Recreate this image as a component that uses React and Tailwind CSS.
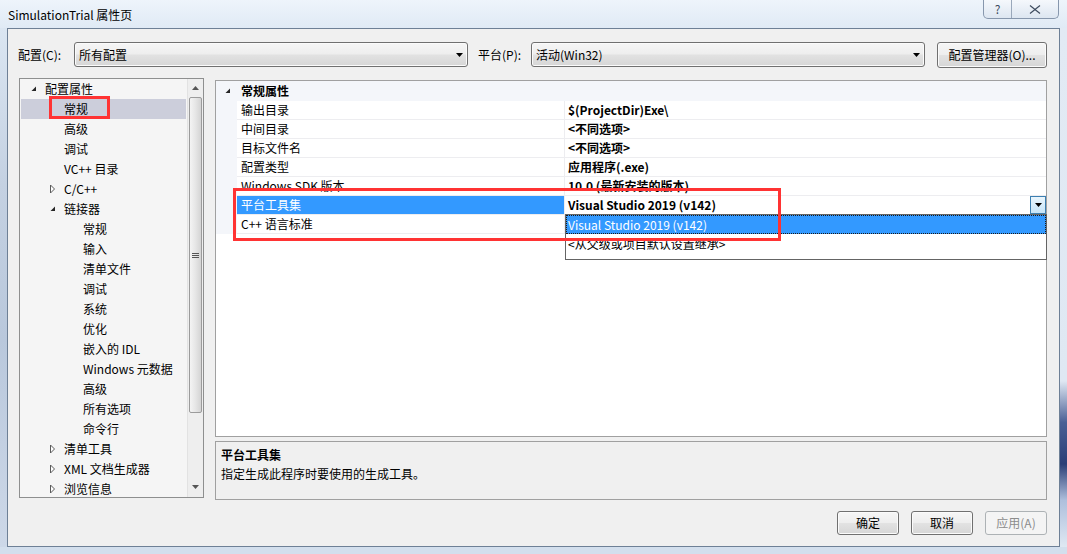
import React from 'react';

const treeItems = [
  { t: '配置属性', lvl: 0, exp: 'open' },
  { t: '常规', lvl: 1, sel: true },
  { t: '高级', lvl: 1 },
  { t: '调试', lvl: 1 },
  { t: 'VC++ 目录', lvl: 1 },
  { t: 'C/C++', lvl: 1, exp: 'closed' },
  { t: '链接器', lvl: 1, exp: 'open' },
  { t: '常规', lvl: 2 },
  { t: '输入', lvl: 2 },
  { t: '清单文件', lvl: 2 },
  { t: '调试', lvl: 2 },
  { t: '系统', lvl: 2 },
  { t: '优化', lvl: 2 },
  { t: '嵌入的 IDL', lvl: 2 },
  { t: 'Windows 元数据', lvl: 2 },
  { t: '高级', lvl: 2 },
  { t: '所有选项', lvl: 2 },
  { t: '命令行', lvl: 2 },
  { t: '清单工具', lvl: 1, exp: 'closed' },
  { t: 'XML 文档生成器', lvl: 1, exp: 'closed' },
  { t: '浏览信息', lvl: 1, exp: 'closed' },
];

const indent = { 0: 'pl-[8px]', 1: 'pl-[27px]', 2: 'pl-[46px]' };

const props = [
  ['输出目录', '$(ProjectDir)Exe\\'],
  ['中间目录', '<不同选项>'],
  ['目标文件名', '<不同选项>'],
  ['配置类型', '应用程序(.exe)'],
  ['Windows SDK 版本', '10.0 (最新安装的版本)'],
  ['平台工具集', 'Visual Studio 2019 (v142)', true],
  ['C++ 语言标准', ''],
];

// win7 style button face
const face =
  'border border-[#707070] rounded-[3px] bg-[linear-gradient(to_bottom,#f6f6f6_0%,#eeeeee_48%,#e2e2e2_52%,#d6d6d6_100%)] shadow-[inset_0_0_0_1px_#fbfbfb]';

function Expander({ type }) {
  if (type === 'open')
    return (
      <svg width="8" height="8" viewBox="0 0 8 8">
        <path d="M6 1.5 L6 6 L1.5 6 Z" fill="#262626" />
      </svg>
    );
  if (type === 'closed')
    return (
      <svg width="8" height="10" viewBox="0 0 8 10">
        <path d="M1.5 1 L5.5 5 L1.5 9 Z" fill="#fff" stroke="#5a5a5a" strokeWidth="1" />
      </svg>
    );
  return null;
}

function DownArrow() {
  return (
    <svg width="7" height="4" viewBox="0 0 7 4">
      <path d="M0 0 L7 0 L3.5 4 Z" fill="#000" />
    </svg>
  );
}

function Combo({ text, className }) {
  return (
    <div className={`h-[25px] flex items-center justify-between pl-[4px] pr-[4px] ${face} ${className}`}>
      <span className="leading-[18px]">{text}</span>
      <DownArrow />
    </div>
  );
}

function Tree() {
  return (
    <div className="w-[185px] h-[420px] border border-[#8e8f8f] bg-[#f5f5f5] flex overflow-hidden">
      <div className="flex-1 px-[1px]">
        {treeItems.map((it, i) => (
          <div
            key={i}
            className={`h-[20px] flex items-center ${indent[it.lvl]} ${it.sel ? 'bg-[#cccedb]' : ''}`}
          >
            <div className="w-[16px] flex items-center pl-[1px]">
              <Expander type={it.exp} />
            </div>
            <span className="leading-[18px] whitespace-nowrap">{it.t}</span>
          </div>
        ))}
      </div>
      {/* scrollbar */}
      <div className="w-[16px] bg-[#eeeeee] border-l border-[#e2e2e2] flex flex-col">
        <div className="h-[18px] flex items-center justify-center">
          <svg width="7" height="4" viewBox="0 0 7 4">
            <path d="M0 4 L7 4 L3.5 0 Z" fill="#555" />
          </svg>
        </div>
        <div className="mx-[1px] h-[316px] rounded-[2px] border border-[#9b9b9b] bg-[linear-gradient(to_right,#f4f4f4,#e6e6e6_50%,#d4d4d4)] flex flex-col items-center justify-center gap-[1px]">
          <div className="w-[7px] h-[1px] bg-[#555]" />
          <div className="w-[7px] h-[1px] bg-[#555]" />
          <div className="w-[7px] h-[1px] bg-[#555]" />
        </div>
        <div className="flex-1" />
        <div className="h-[18px] flex items-center justify-center mb-[1px]">
          <svg width="7" height="4" viewBox="0 0 7 4">
            <path d="M0 0 L7 0 L3.5 4 Z" fill="#555" />
          </svg>
        </div>
      </div>
    </div>
  );
}

function PropGrid() {
  return (
    <div className="relative mt-[2px] h-[357px] border border-[#a0a0a0] bg-white">
      <div className="h-[20px] flex items-center bg-[#f4f6fa]">
        <div className="w-[21px] flex items-center pl-[8px]">
          <Expander type="open" />
        </div>
        <span className="pl-[4px] font-bold leading-[18px]">常规属性</span>
      </div>
      {props.map(([label, value, sel], i) => (
        <div key={i} className="h-[19px] flex">
          <div className="w-[21px] bg-[#f4f6fa]" />
          <div
            className={`w-[328px] flex items-center pl-[4px] border-b border-r border-[#ededf0] ${
              sel ? 'bg-[#3399ff] text-white' : ''
            }`}
          >
            <span className="leading-[18px] whitespace-nowrap">{label}</span>
          </div>
          <div className="flex-1 flex items-center justify-between pl-[3px] border-b border-[#ededf0]">
            <span className="font-bold leading-[18px] whitespace-nowrap">{value}</span>
            {sel && (
              <div className="w-[16px] h-[18px] border border-[#3c7fb1] bg-[linear-gradient(to_bottom,#eaf6fd,#c6e4f8)] flex items-center justify-center">
                <DownArrow />
              </div>
            )}
          </div>
        </div>
      ))}

      {/* open dropdown list */}
      <div className="absolute left-[349px] top-[133px] w-[482px] h-[46px] border border-[#646464] bg-white">
        <div className="h-[19px] bg-[#3399ff] text-white flex items-center pl-[2px] outline-1 outline-dotted outline-[#1a1a1a] -outline-offset-1">
          <span className="leading-[18px]">Visual Studio 2019 (v142)</span>
        </div>
        <div className="h-[19px] flex items-center pl-[2px]">
          <span className="leading-[18px]">&lt;从父级或项目默认设置继承&gt;</span>
        </div>
      </div>
    </div>
  );
}

export default function App() {
  return (
    <div className="relative w-[1067px] h-[554px] overflow-hidden flex flex-col bg-[#dbe6f2] font-['Noto_Sans_CJK_SC','Noto_Sans',sans-serif] text-[12px] text-black">
      {/* title bar */}
      <div className="h-[28px] flex items-start justify-between bg-[linear-gradient(to_bottom,#eef4fb,#e0eaf5)]">
        <div className="pl-[8px] pt-[6px] leading-[18px]">SimulationTrial 属性页</div>
        <div className="mr-[8px] flex h-[19px] rounded-b-[5px] border border-t-0 border-[#8797ad] bg-[linear-gradient(to_bottom,#f5f8fc,#dde6f1)] overflow-hidden">
          <div className="w-[28px] border-r border-[#9aa8bb] flex items-center justify-center text-[#3d4b5e] text-[12px] leading-none">?</div>
          <div className="w-[46px] flex items-center justify-center">
            <svg width="12" height="9" viewBox="0 0 12 9">
              <path d="M1 0.5 L6 4.5 L11 0.5 M1 8.5 L6 4.5 L11 8.5" stroke="#3d4b5e" strokeWidth="1.2" fill="none" />
            </svg>
          </div>
        </div>
      </div>

      <div className="flex h-[519px]">
        <div className="w-[7px] bg-[linear-gradient(to_bottom,#dbe6f2,#c4d1e2_30%,#b9c8dc_60%,#cdd8e8)]" />

        {/* client area */}
        <div className="w-[1053px] border border-[#6e8096] bg-[#f0f0f0] flex flex-col">
          <div className="mt-[13px] h-[25px] flex items-center">
            <span className="ml-[10px] w-[56px] leading-[18px]">配置(C):</span>
            <Combo text="所有配置" className="w-[394px]" />
            <span className="ml-[10px] w-[53px] leading-[18px]">平台(P):</span>
            <Combo text="活动(Win32)" className="w-[394px]" />
            <button className={`ml-[12px] w-[110px] h-[26px] ${face} leading-[18px]`}>配置管理器(O)...</button>
          </div>

          <div className="mt-[11px] ml-[11px] flex">
            <Tree />
            <div className="ml-[11px] w-[832px] flex flex-col">
              <PropGrid />
              <div className="mt-[4px] h-[59px] border border-[#a0a0a0] bg-[#f0f0f0] pl-[5px] pt-[3px] leading-[19px]">
                <div className="font-bold">平台工具集</div>
                <div>指定生成此程序时要使用的生成工具。</div>
              </div>
            </div>
          </div>

          <div className="mt-[11px] pr-[12px] flex justify-end gap-[12px]">
            <button className={`w-[62px] h-[24px] ${face} leading-[18px]`}>确定</button>
            <button className={`w-[62px] h-[24px] ${face} leading-[18px]`}>取消</button>
            <button className="w-[62px] h-[24px] rounded-[3px] border border-[#adb2b5] bg-[#f4f4f4] text-[#8c8c8c] leading-[18px]">
              应用(A)
            </button>
          </div>
        </div>

        <div className="w-[7px] bg-[linear-gradient(to_bottom,#e2eaf4_0%,#dfe8f3_68%,#4a5f95_76%,#2b3d76_84%,#aebfdc_91%,#dfe8f3_100%)]" />
      </div>
      <div className="h-[7px] bg-[#d3dfed]" />

      {/* red highlight boxes */}
      <div className="absolute left-[49px] top-[96px] w-[61px] h-[23px] border-[3px] border-[#ff3333]" />
      <div className="absolute left-[233px] top-[188px] w-[548px] h-[53px] border-[3px] border-[#ff3333]" />
    </div>
  );
}
